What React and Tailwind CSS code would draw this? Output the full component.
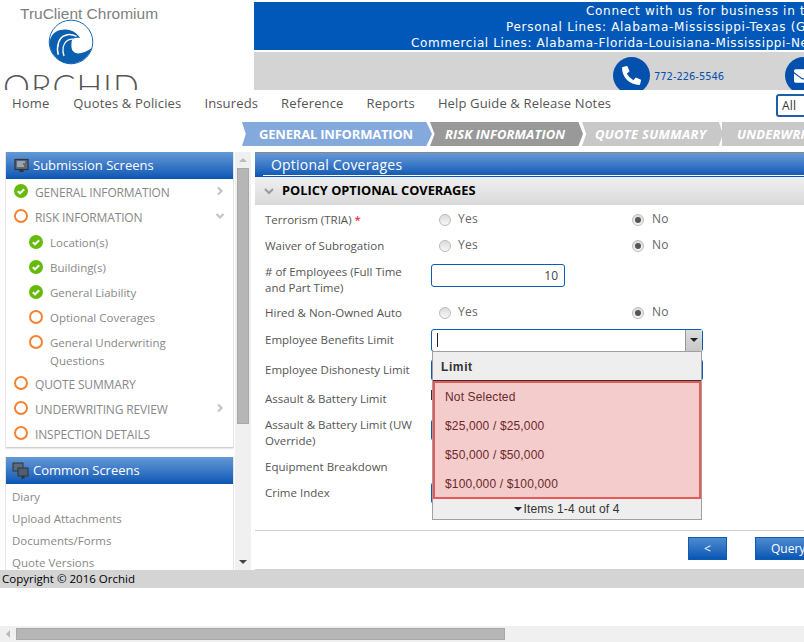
import React from 'react';
import { FaPhoneAlt, FaEnvelope } from 'react-icons/fa';

const Check = () => (
  <svg width="14" height="14" viewBox="0 0 14 14" className="shrink-0">
    <circle cx="7" cy="7" r="7" fill="#66bb0a" />
    <path d="M3.8 7.2 6 9.3 10.2 5.2" fill="none" stroke="#fff" strokeWidth="2" />
  </svg>
);

const Ring = () => <span className="w-[14px] h-[14px] shrink-0 rounded-full border-2 border-[#f58233] bg-white" />;

const Chevron = ({ down }) => (
  <svg width="10" height="10" viewBox="0 0 10 10" className="shrink-0">
    <path d={down ? 'M1.5 3 5 6.5 8.5 3' : 'M3 1.5 6.5 5 3 8.5'} fill="none" stroke="#c4c4c4" strokeWidth="2.2" />
  </svg>
);

const Monitor = () => (
  <svg width="16" height="16" viewBox="0 0 16 16" className="shrink-0">
    <rect x="1" y="1.5" width="13" height="10" fill="#5b6a7c" stroke="#333" strokeWidth="1.2" />
    <path d="M3 4h8M3 6h6M3 8h7" stroke="#ddd" strokeWidth="1" />
    <path d="M5 14h5l-1-2.5H6z" fill="#333" />
  </svg>
);

const Monitors = () => (
  <svg width="18" height="18" viewBox="0 0 18 18" className="shrink-0 -ml-[2px]">
    <rect x="1" y="1" width="10" height="8" fill="#5b6a7c" stroke="#333" />
    <rect x="6" y="6" width="10" height="8" fill="#4d5f75" stroke="#333" />
    <path d="M9 16.5h4l-1-2.5h-2z" fill="#333" />
  </svg>
);

const Radio = ({ on }) => (
  <span className="w-[12px] h-[12px] rounded-full border border-[#bbb] bg-gradient-to-b from-[#dcdcdc] to-[#f7f7f7] flex items-center justify-center shrink-0">
    {on && <span className="w-[6px] h-[6px] rounded-full bg-[#555]" />}
  </span>
);

const YesNo = () => (
  <div className="flex items-center text-[12px] text-[#666] tracking-[0.3px]">
    <div className="w-[201px] pl-[8px] flex items-center gap-[7px]"><Radio /><span className="-mt-[2px]">Yes</span></div>
    <div className="flex items-center gap-[8px]"><Radio on /><span className="-mt-[2px]">No</span></div>
  </div>
);

const Row = ({ label, h, children }) => (
  <div className={`flex items-center ${h}`}>
    <div className="w-[166px] shrink-0 leading-[16px] text-[11.5px] text-[#555]">{label}</div>
    {children}
  </div>
);

const Side = ({ icon, text, arrow, sub, tall }) => (
  <div className={`flex items-start ${tall ? 'h-[42px]' : 'h-[25px]'} ${sub ? 'pl-[23px] pt-[6px]' : 'pl-[8px] pt-[5px]'}`}>
    {icon}
    <span className={`ml-[7px] flex-1 text-[#888] leading-[18px] ${sub ? '-mt-[1px] text-[11.5px]' : 'text-[12px] tracking-[-0.15px]'}`}>{text}</span>
    {arrow && <span className="mr-[8px] mt-[2px]"><Chevron down={arrow === 'down'} /></span>}
  </div>
);

const PanelHead = ({ icon, children }) => (
  <div className="h-[27px] bg-gradient-to-b from-[#6499d6] to-[#0556b4] flex items-center pl-[8px] gap-[3px] text-white text-[13px]">
    {icon}
    {children}
  </div>
);

export default function App() {
  return (
    <div className="w-[804px] h-[642px] overflow-hidden bg-white flex flex-col font-['Open_Sans',sans-serif]">
      {/* header */}
      <div className="h-[90px] flex shrink-0">
        <div className="w-[254px] shrink-0 overflow-hidden flex flex-col pl-[3px]">
          <div className="pl-[17px] pt-[4px] h-[20px] leading-[20px] text-[15.5px] text-[#808080] font-['Liberation_Sans',sans-serif]">TruClient Chromium</div>
          <svg width="46" height="46" viewBox="0 0 46 46" className="ml-[45px] shrink-0 -mt-[1px]">
            <circle cx="23" cy="23" r="21.8" fill="none" stroke="#1a6cb8" strokeWidth="1" />
            <path d="M1.5 24C2 16 8 10.500 15.300 10.700 20 9.500 28 12 32 19 28 18 24 19 23.700 22.300 23 27 23.500 31 25.300 32.300 28 36.500 37 34 43.700 29 41 37 35 44 22 44.700 10 44 2 34 1.500 24z" fill="#0a5fae" />
            <path d="M10.300 35.700C8 28 11 18 17 16.500 20 15 25 15.500 28.500 17.300" fill="none" stroke="#fff" strokeWidth="1.5" />
            <path d="M16 37C14 31 15 25 18.700 22 21 20 24 19.800 27 20.500" fill="none" stroke="#fff" strokeWidth="1.4" />
          </svg>
          <div className="mt-[4px] h-[17px] text-[34px] leading-[34px] tracking-[1px] text-[#555] font-light font-['Lato',sans-serif] whitespace-nowrap">ORCHID</div>
        </div>
        <div className="flex-1 min-w-0 pt-[2px] flex flex-col overflow-hidden">
          <div className="h-[48px] pt-[1px] bg-[#0258b8] text-white text-[12px] leading-[16px] tracking-[0.7px] font-['DejaVu_Sans',sans-serif] whitespace-nowrap text-left overflow-hidden">
            <div className="pl-[332px]">Connect with us for business in the following states:</div>
            <div className="pl-[252px]">Personal Lines: Alabama-Mississippi-Texas (G</div>
            <div className="pl-[157px] tracking-[0.6px]">Commercial Lines: Alabama-Florida-Louisiana-Mississippi-New</div>
          </div>
          <div className="h-[38px] mt-[2px] bg-[#d4d4d4] flex items-start pl-[359px] overflow-hidden">
            <div className="w-[37px] h-[37px] mt-[5px] rounded-full bg-[#0450ad] flex items-center justify-center shrink-0">
              <FaPhoneAlt className="text-white text-[19px]" />
            </div>
            <span className="ml-[4px] mt-[17px] w-[71px] text-[11px] leading-[16px] text-[#0450ad] font-['DejaVu_Sans_Condensed','DejaVu_Sans',sans-serif] whitespace-nowrap">772-226-5546</span>
            <div className="w-[37px] h-[37px] mt-[5px] ml-[61px] rounded-full bg-[#0450ad] flex items-center justify-start pl-[9px] shrink-0">
              <FaEnvelope className="text-white text-[18px]" />
            </div>
          </div>
        </div>
      </div>

      {/* nav */}
      <div className="h-[32px] flex items-start shrink-0 pl-[12px] text-[13px] tracking-[0.15px] text-[#555] relative">
        <div className="flex gap-[23px] leading-[27px]">
          <span>Home</span>
          <span className="ml-[1px]">Quotes &amp; Policies</span>
          <span>Insureds</span>
          <span>Reference</span>
          <span>Reports</span>
          <span>Help Guide &amp; Release Notes</span>
        </div>
        <div className="absolute left-[776px] top-[4px] w-[60px] h-[23px] border-2 border-[#1d5ea8] rounded-[3px] text-[12px] text-[#333] pl-[4px] leading-[20px] bg-white">All</div>
      </div>

      {/* steps */}
      <div className="h-[24px] flex pl-[242px] shrink-0 font-bold text-[13px] text-white whitespace-nowrap">
        <div className="w-[190px] shrink-0 bg-[#84a9dc] pl-[17px] tracking-[-0.2px] leading-[24px] [clip-path:polygon(0_0,97%_0,100%_50%,97%_100%,0_100%,2%_50%)]">GENERAL INFORMATION</div>
        <div className="w-[153px] shrink-0 -ml-[2px] bg-[#999999] pl-[15px] tracking-[0.1px] italic leading-[24px] [clip-path:polygon(0_0,97%_0,100%_50%,97%_100%,0_100%,3%_50%)]">RISK INFORMATION</div>
        <div className="w-[141px] shrink-0 -ml-[1px] bg-[#c8c8c8] pl-[13px] tracking-[0.3px] italic leading-[24px] [clip-path:polygon(0_0,97%_0,100%_50%,97%_100%,0_100%,3%_50%)]">QUOTE SUMMARY</div>
        <div className="w-[141px] shrink-0 -ml-[1px] bg-[#c8c8c8] pl-[15px] tracking-[0.2px] italic leading-[24px]">UNDERWRITING REVIEW</div>
      </div>

      {/* body */}
      <div className="h-[418px] mt-[6px] flex shrink-0">
        <div className="w-[229px] ml-[5px] shrink-0 overflow-hidden flex flex-col">
          <div className="shadow-[0_1px_2px_#bbb] bg-white border-x border-[#e4e4e4] pb-[1px]">
            <PanelHead icon={<Monitor />}>Submission Screens</PanelHead>
            <Side icon={<Check />} text="GENERAL INFORMATION" arrow="right" />
            <Side icon={<Ring />} text="RISK INFORMATION" arrow="down" />
            <Side sub icon={<Check />} text="Location(s)" />
            <Side sub icon={<Check />} text="Building(s)" />
            <Side sub icon={<Check />} text="General Liability" />
            <Side sub icon={<Ring />} text="Optional Coverages" />
            <Side sub tall icon={<Ring />} text={<>General Underwriting<br />Questions</>} />
            <Side icon={<Ring />} text="QUOTE SUMMARY" />
            <Side icon={<Ring />} text="UNDERWRITING REVIEW" arrow="right" />
            <Side icon={<Ring />} text="INSPECTION DETAILS" />
          </div>
          <div className="mt-[10px] flex-1 border-x border-[#e4e4e4] bg-white">
            <PanelHead icon={<Monitors />}>Common Screens</PanelHead>
            <div className="pl-[6px] text-[11.5px] leading-[22px] text-[#888] pt-[2px]">
              <div>Diary</div>
              <div>Upload Attachments</div>
              <div>Documents/Forms</div>
              <div>Quote Versions</div>
            </div>
          </div>
        </div>

        {/* sidebar scrollbar */}
        <div className="w-[16px] ml-[1px] shrink-0 bg-[#f0f0f0] flex flex-col items-center">
          <div className="h-[16px] flex items-center justify-center">
            <span className="w-0 h-0 border-x-[4px] border-x-transparent border-b-[4px] border-b-[#bbb]" />
          </div>
          <div className="w-[12px] h-[256px] bg-[#b6b6b6] border border-[#a8a8a8]" />
          <div className="flex-1" />
          <div className="h-[16px] flex items-center justify-center">
            <span className="w-0 h-0 border-x-[4px] border-x-transparent border-t-[4px] border-t-[#444]" />
          </div>
        </div>

        {/* main */}
        <div className="w-[560px] ml-[4px] shrink-0 flex flex-col">
          <div className="h-[25px] border-t border-[#888] bg-gradient-to-b from-[#6499d6] to-[#0556b4] pl-[8px]">
            <div className="h-[23px] border-b border-white pl-[8px] text-white text-[14px] leading-[24px] tracking-[0.2px]">Optional Coverages</div>
          </div>
          <div className="h-[28px] bg-gradient-to-b from-[#f0f0f0] to-[#d9d9d9] flex items-center pl-[9px] gap-[8px]">
            <svg width="10" height="10" viewBox="0 0 10 10"><path d="M1 3 5 7 9 3" fill="none" stroke="#999" strokeWidth="2" /></svg>
            <span className="text-[12.8px] font-bold text-black">POLICY OPTIONAL COVERAGES</span>
          </div>
          <div className="relative flex-1 pl-[10px] flex flex-col">
            <Row label={<>Terrorism (TRIA) <span className="text-red-600">*</span></>} h="h-[27px] mt-[1px]"><YesNo /></Row>
            <Row label="Waiver of Subrogation" h="h-[26px]"><YesNo /></Row>
            <Row label={<># of Employees (Full Time<br />and Part Time)</>} h="h-[41px]">
              <div className="w-[134px] h-[23px] -mt-[9px] rounded-[3px] border border-[#0c5cb4] bg-white text-right pr-[6px] text-[12px] leading-[21px] text-[#444]">10</div>
            </Row>
            <Row label="Hired & Non-Owned Auto" h="h-[26px]"><YesNo /></Row>
            <Row label="Employee Benefits Limit" h="h-[28px]">
              <div className="w-[272px] h-[23px] rounded-[3px] border border-[#0c5cb4] bg-white flex items-center justify-between pl-[5px]">
                <span className="w-[1px] h-[14px] bg-[#222]" />
                <span className="w-[17px] h-[21px] bg-gradient-to-b from-[#ddd] to-[#c8c8c8] border-l border-[#999] flex items-center justify-center">
                  <span className="w-0 h-0 border-x-[4px] border-x-transparent border-t-[4px] border-t-[#222]" />
                </span>
              </div>
            </Row>
            <Row label="Employee Dishonesty Limit" h="h-[32px]">
              <div className="w-[272px] h-[22px] rounded-[3px] border border-[#0c5cb4] bg-white" />
            </Row>
            <Row label="Assault & Battery Limit" h="h-[26px]">
              <span className="w-[2px] h-[10px] -mt-[8px] bg-[#333]" />
            </Row>
            <Row label={<>Assault &amp; Battery Limit (UW<br />Override)</>} h="h-[42px]">
              <div className="w-[134px] h-[22px] -mt-[6px] rounded-[3px] border border-[#0c5cb4] bg-white" />
            </Row>
            <Row label="Equipment Breakdown" h="h-[26px]" />
            <Row label="Crime Index" h="h-[26px]">
              <div className="w-[134px] h-[22px] rounded-[3px] border border-[#0c5cb4] bg-white" />
            </Row>

            {/* open dropdown */}
            <div className="absolute left-[177px] top-[146px] w-[270px] flex flex-col bg-white border-x border-b border-t border-[#a0a0a0] font-['Liberation_Sans',sans-serif]">
              <div className="h-[29px] bg-[#eeeeee] border-b border-[#333] pl-[8px] text-[12px] font-bold leading-[30px] tracking-[0.6px] text-[#333]">Limit</div>
              <div className="h-[118px] bg-[#f4cccc] border-2 border-[#e8585a] pl-[10px] text-[12px] leading-[29px] tracking-[0.15px] text-[#6b2a2a]">
                <div>Not Selected</div>
                <div>$25,000 / $25,000</div>
                <div>$50,000 / $50,000</div>
                <div>$100,000 / $100,000</div>
              </div>
              <div className="h-[20px] bg-[#eeeeee] flex items-center justify-center gap-[1px] text-[12px] tracking-[0.15px] text-[#333]">
                <span className="w-0 h-0 border-x-[4px] border-x-transparent border-t-[4px] border-t-[#222]" />
                Items 1-4 out of 4
              </div>
            </div>

            <div className="absolute left-0 right-0 top-[325px] h-[40px] border-y border-[#d0d0d0] pl-[433px] pt-[6px] flex gap-[28px]">
              <div className="w-[39px] h-[23px] border border-[#0c5cb4] bg-gradient-to-b from-[#4d8bd0] to-[#0556b4] text-white text-[12px] leading-[21px] text-center">&lt;</div>
              <div className="w-[60px] h-[23px] border border-[#0c5cb4] bg-gradient-to-b from-[#4d8bd0] to-[#0556b4] text-white text-[12px] leading-[21px] pl-[15px]">Query</div>
            </div>
          </div>
        </div>
      </div>

      {/* footer */}
      <div className="h-[18px] bg-[#d4d4d4] shrink-0 pl-[2px] text-[11.5px] leading-[18px] text-black">Copyright © 2016 Orchid</div>
      <div className="flex-1" />

      {/* page scrollbar */}
      <div className="h-[16px] bg-[#f0f0f0] flex items-center shrink-0">
        <div className="w-[16px] flex items-center justify-center">
          <span className="w-0 h-0 border-y-[4px] border-y-transparent border-r-[4px] border-r-[#bbb]" />
        </div>
        <div className="w-[489px] h-[12px] bg-[#b6b6b6] border border-[#a8a8a8]" />
      </div>
    </div>
  );
}
